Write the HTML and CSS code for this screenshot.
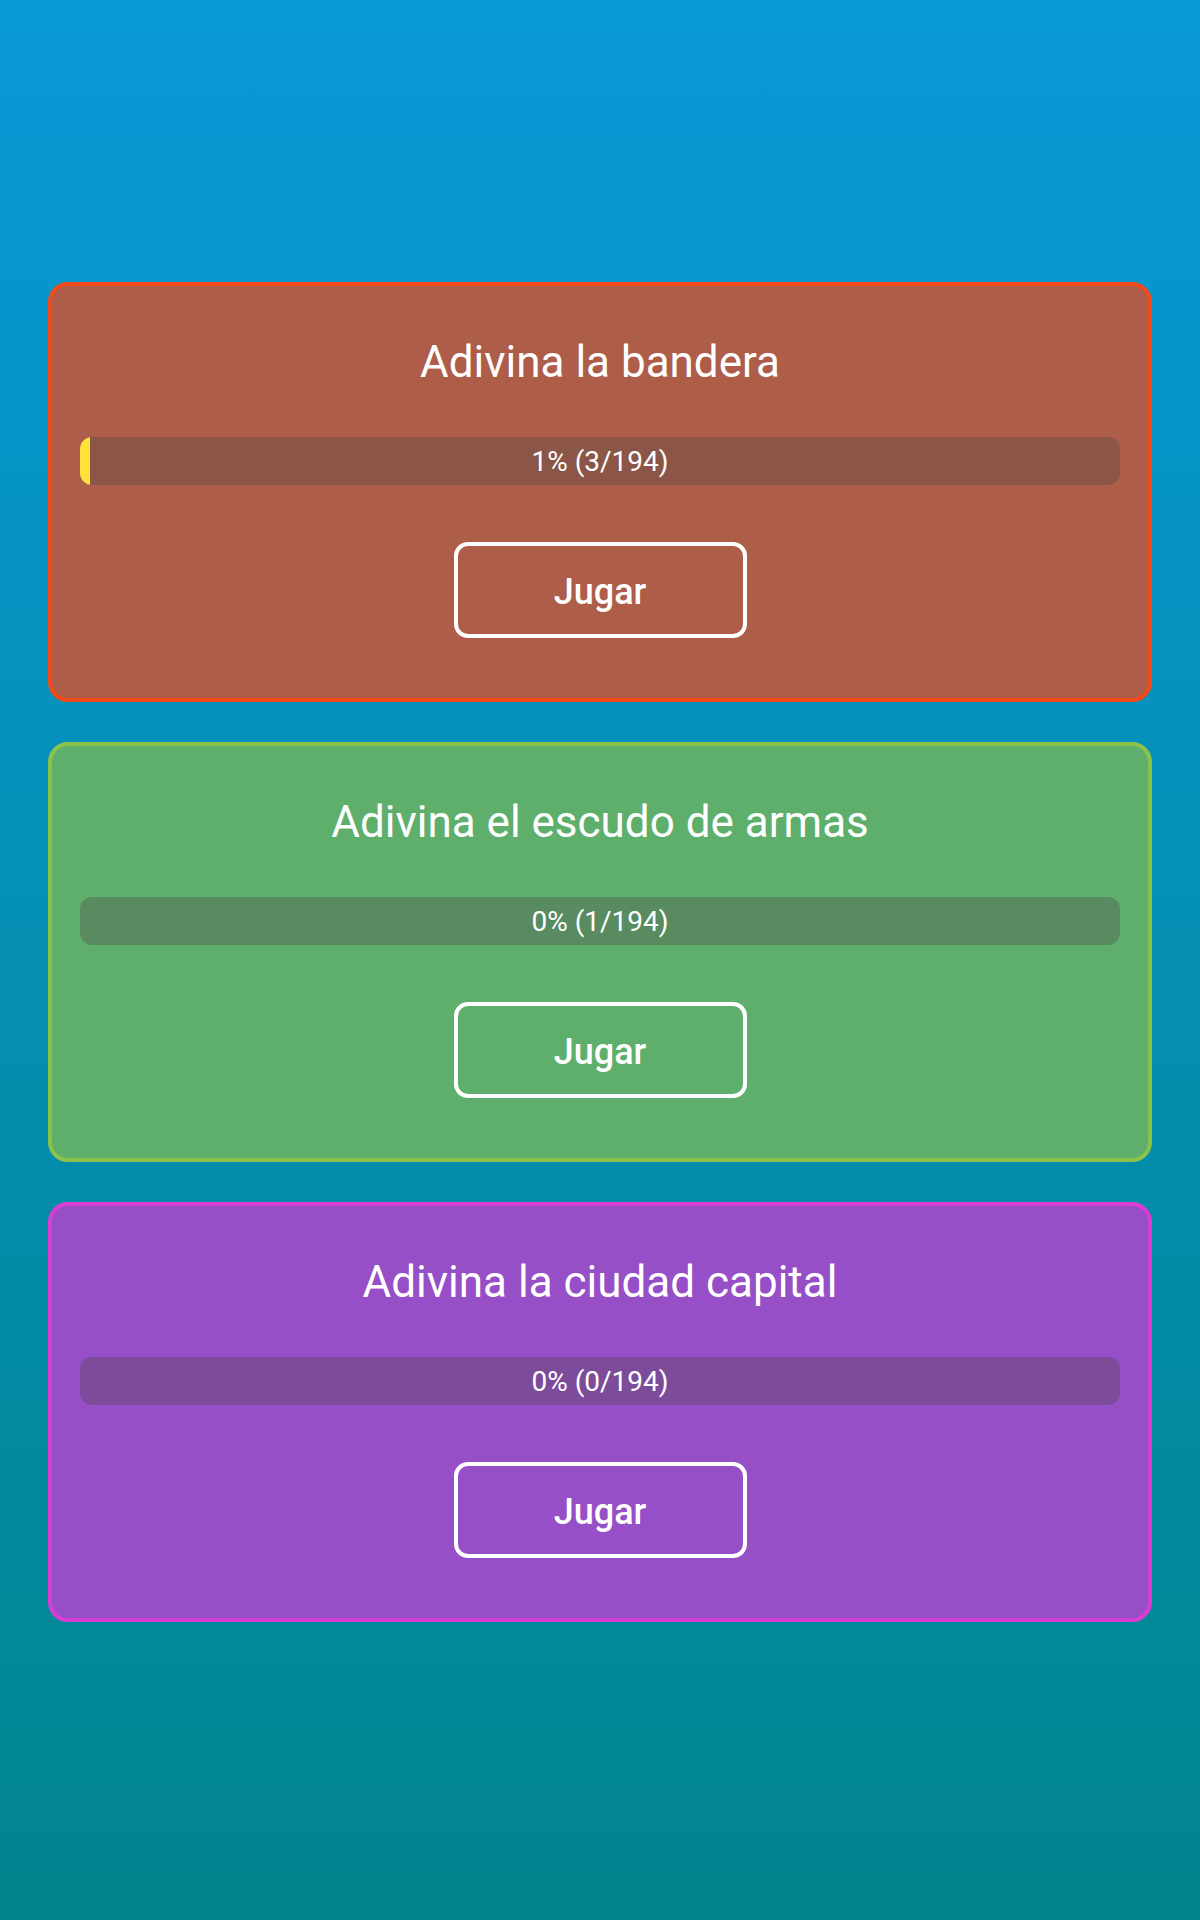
FILE: index.html
```html
<!DOCTYPE html>
<html lang="es">
<head>
<meta charset="utf-8">
<title>Juegos</title>
<link rel="stylesheet" href="styles.css">
</head>
<body>
<main class="list">
  <section class="card card-flag">
    <h2 class="title">Adivina la bandera</h2>
    <div class="bar">
      <div class="fill" style="width:1%"></div>
      <span class="bar-label">1% (3/194)</span>
    </div>
    <button class="play">Jugar</button>
  </section>
  <section class="card card-shield">
    <h2 class="title">Adivina el escudo de armas</h2>
    <div class="bar">
      <div class="fill" style="width:0%"></div>
      <span class="bar-label">0% (1/194)</span>
    </div>
    <button class="play">Jugar</button>
  </section>
  <section class="card card-capital">
    <h2 class="title">Adivina la ciudad capital</h2>
    <div class="bar">
      <div class="fill" style="width:0%"></div>
      <span class="bar-label">0% (0/194)</span>
    </div>
    <button class="play">Jugar</button>
  </section>
</main>
</body>
</html>
```
FILE: styles.css
```css
html, body {
  margin: 0;
  padding: 0;
}
body {
  width: 1200px;
  height: 1920px;
  background: linear-gradient(to bottom, #0899d7 0%, #01858e 100%);
  font-family: Roboto, "Liberation Sans", sans-serif;
  color: #ffffff;
}
.list {
  display: flex;
  flex-direction: column;
  gap: 40px;
  padding: 282px 48px 0;
}
.card {
  box-sizing: border-box;
  height: 420px;
  border: 4px solid;
  border-radius: 20px;
  padding: 50px 28px 0;
  display: flex;
  flex-direction: column;
  align-items: center;
}
.card-flag { background: #ad5d48; border-color: #f4491a; }
.card-flag .bar { background: #8b5547; }
.card-shield { background: #5faf6c; border-color: #8bc34a; }
.card-shield .bar { background: #588b60; }
.card-capital { background: #974fc7; border-color: #d93dd3; }
.card-capital .bar { background: #7c4c9a; }
.title {
  margin: 0;
  font-size: 44px;
  line-height: 52px;
  font-weight: 400;
  text-align: center;
}
.bar {
  position: relative;
  align-self: stretch;
  height: 48px;
  margin-top: 49px;
  border-radius: 12px;
  overflow: hidden;
  display: flex;
  align-items: center;
  justify-content: center;
}
.fill {
  position: absolute;
  left: 0;
  top: 0;
  bottom: 0;
  background: #fee33b;
}
.bar-label {
  position: relative;
  top: 1px;
  font-size: 28px;
  line-height: 48px;
}
.play {
  box-sizing: border-box;
  margin-top: 57px;
  width: 293px;
  height: 96px;
  border: 4px solid #ffffff;
  border-radius: 14px;
  background: transparent;
  color: #ffffff;
  font-family: Roboto, "Liberation Sans", sans-serif;
  font-size: 36px;
  font-weight: 500;
  display: flex;
  align-items: center;
  justify-content: center;
  padding: 3px 0 0;
}
```
